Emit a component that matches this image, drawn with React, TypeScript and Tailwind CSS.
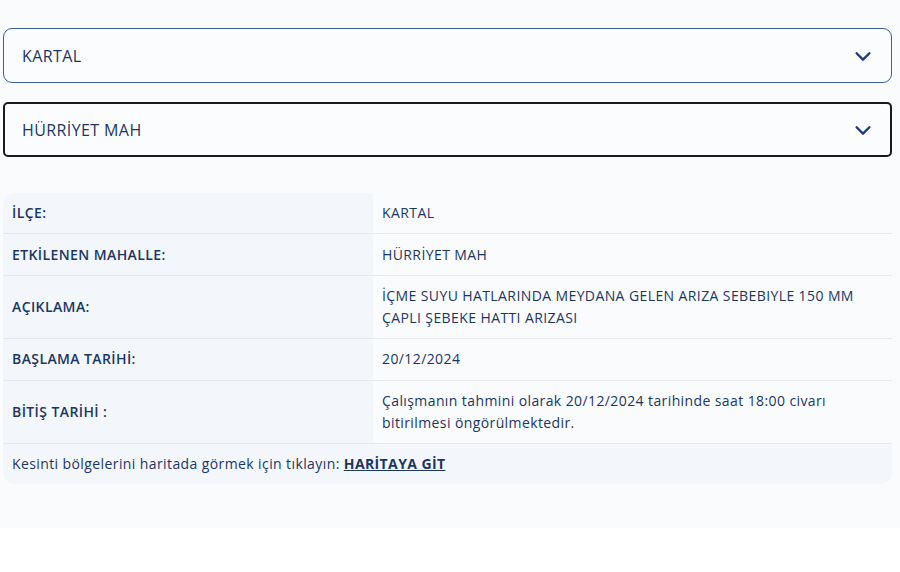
import { FC } from "react";

type Row = {
  label: string;
  value: string;
};

const rows: Row[] = [
  { label: "İLÇE:", value: "KARTAL" },
  { label: "ETKİLENEN MAHALLE:", value: "HÜRRİYET MAH" },
  {
    label: "AÇIKLAMA:",
    value:
      "İÇME SUYU HATLARINDA MEYDANA GELEN ARIZA SEBEBIYLE 150 MM ÇAPLI ŞEBEKE HATTI ARIZASI",
  },
  { label: "BAŞLAMA TARİHİ:", value: "20/12/2024" },
  {
    label: "BİTİŞ TARİHİ :",
    value:
      "Çalışmanın tahmini olarak 20/12/2024 tarihinde saat 18:00 civarı bitirilmesi öngörülmektedir.",
  },
];

const Chevron: FC = () => (
  <svg
    width="22"
    height="22"
    viewBox="0 0 24 24"
    fill="none"
    stroke="#1c3e7a"
    strokeWidth="2.6"
    strokeLinecap="round"
    strokeLinejoin="round"
  >
    <path d="M5 9l7 7 7-7" />
  </svg>
);

type SelectProps = {
  value: string;
  focused?: boolean;
};

const Select: FC<SelectProps> = ({ value, focused }) => (
  <div
    className={
      focused
        ? "flex items-center justify-between h-[55px] pl-[17px] pr-[16px] rounded-[5px] border-2 border-[#1a1a1a] bg-[#fafcfe]"
        : "flex items-center justify-between h-[55px] pl-[18px] pr-[17px] rounded-[9px] border border-[#3c5f9c] bg-[#fafcfe]"
    }
  >
    <span className="text-[16px] tracking-[0.4px] text-[#1c3664]">{value}</span>
    <Chevron />
  </div>
);

export default function App() {
  return (
    <div
      className="bg-[#f9fbfd] pt-[28px] pb-[44px] pl-[3px] pr-[8px] text-[#1c3664]"
      style={{ fontFamily: "'Open Sans', 'Noto Sans', sans-serif" }}
    >
      <div className="flex flex-col gap-[19px]">
        <Select value="KARTAL" />
        <Select value="HÜRRİYET MAH" focused />
      </div>

      <div className="mt-[36px] rounded-[12px] overflow-hidden bg-[#f3f6fa] text-[14px] tracking-[0.4px] leading-[22px]">
        {rows.map(row => (
          <div
            key={row.label}
            className="grid grid-cols-[370px_1fr] border-b border-[#e6e8eb]"
          >
            <div className="flex items-center px-[9px] py-[9.2px] font-semibold">
              {row.label}
            </div>
            <div className="bg-[#f9fbfd] pl-[9px] pr-[20px] py-[9.2px]">
              {row.value}
            </div>
          </div>
        ))}
        <div className="px-[9px] py-[9px]">
          Kesinti bölgelerini haritada görmek için tıklayın:{" "}
          <a href="#" className="font-bold underline">
            HARİTAYA GİT
          </a>
        </div>
      </div>
    </div>
  );
}
